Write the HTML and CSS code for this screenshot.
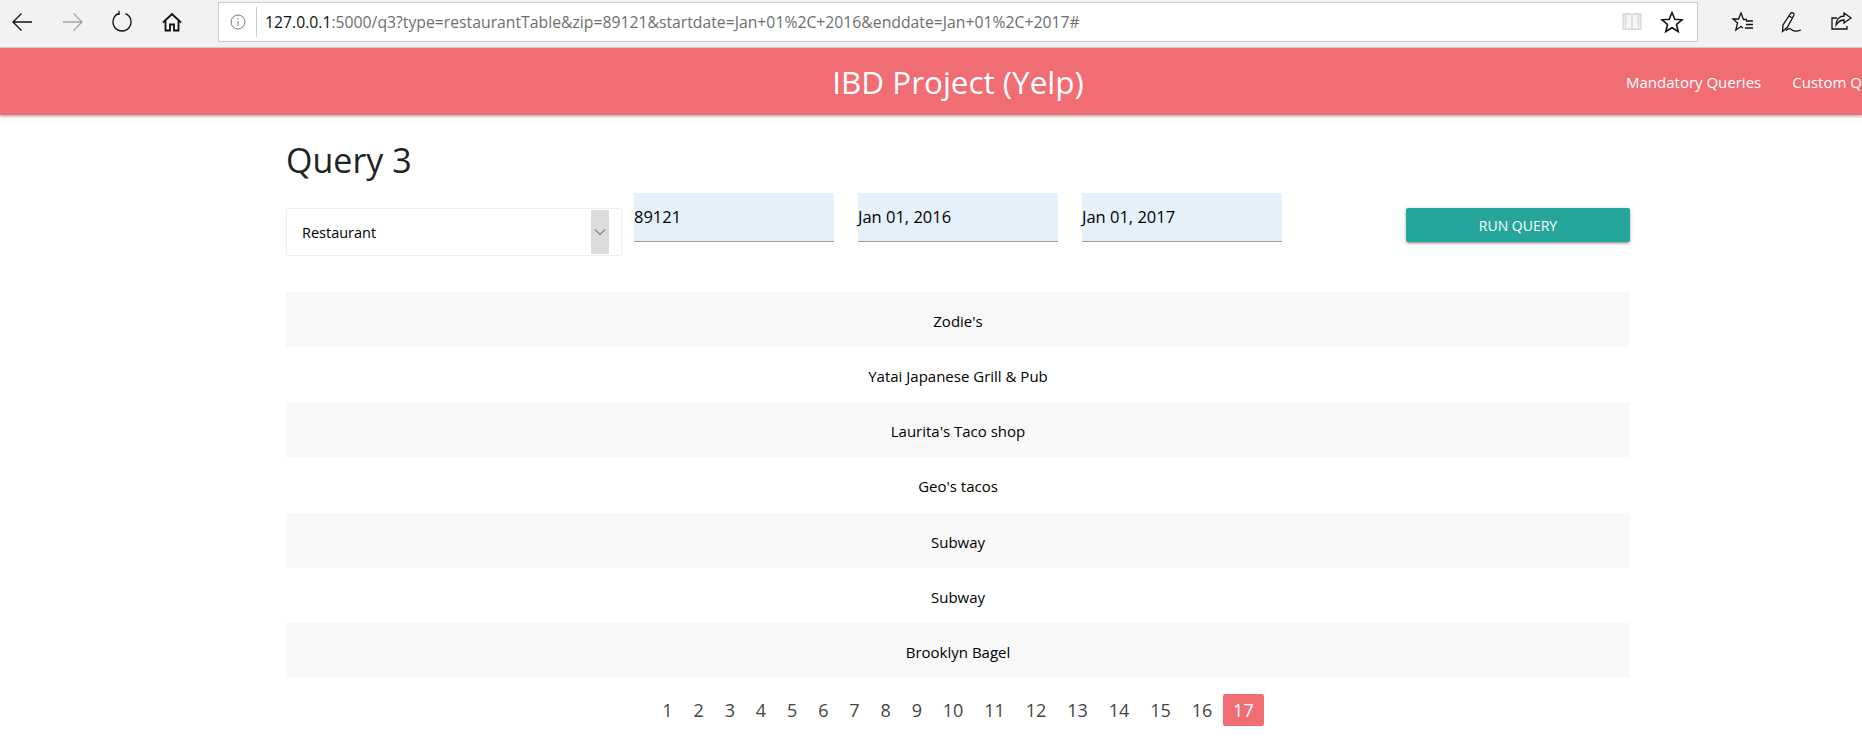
FILE: index.html
```html
<!DOCTYPE html>
<html lang="en">
  <head>
    <meta charset="UTF-8" />
    <title>IBD Project (Yelp)</title>
    <link rel="stylesheet" href="styles.css">
  </head>
  <body>
    <!-- Browser toolbar -->
    <div class="toolbar">
      <div class="tool-group">
        <svg class="tool" viewBox="0 0 24 24"><path d="M22 12H3M11.500 3.500 3 12l8.500 8.500"/></svg>
        <svg class="tool tool-off" viewBox="0 0 24 24"><path d="M3 12h19M13.500 3.500 22 12l-8.500 8.500"/></svg>
        <svg class="tool" viewBox="0 0 24 24"><path d="M8.500 3.700A9 9 0 1 0 15.500 3.700M9 .8v3.500H5.500"/></svg>
        <svg class="tool tool-bold" viewBox="0 0 24 24"><path d="M3 12.500 12 4l9 8.500M5.500 10.500V20.500h4.500v-6h4v6h4.500V10.500"/></svg>
      </div>
      <div class="address">
        <svg class="info" viewBox="0 0 16 16"><circle cx="8" cy="8" r="7"/><path d="M8 7v5M8 4v1.500"/></svg>
        <span class="url"><b>127.0.0.1</b>:5000/q3?type=restaurantTable&amp;zip=89121&amp;startdate=Jan+01%2C+2016&amp;enddate=Jan+01%2C+2017#</span>
        <svg class="book" viewBox="0 0 20 20"><path d="M1 2h7l2 1 2-1h7v15h-7l-2 1-2-1H1zM10 3v14M3.500 2v13M16.500 2v13"/></svg>
        <svg class="tool star" viewBox="0 0 24 24"><path d="M12 2.500l2.800 6.700 7.200.6-5.500 4.700 1.700 7-6.200-3.800-6.200 3.800 1.700-7L2 9.800l7.200-.6z"/></svg>
      </div>
      <div class="tool-group right-tools">
        <svg class="tool" viewBox="0 0 24 24"><path d="M16 9.500H12.500L10 3 7.500 9H2l4.500 4L4.800 20 10 16.500l2 1.500M15 11h7M15 14.500h7M14 18h8"/></svg>
        <svg class="tool" viewBox="0 0 24 24"><path d="M2.500 21.500 3 15 10.500 3.500c1-1.500 4-.5 3.500 1.500L7.500 17zM9 6l4 2.500M6 20.500c3-3 4-2 6-.5s4 2 9 0"/></svg>
        <svg class="tool" viewBox="0 0 24 24"><path d="M8 8H3v11h15v-3M15 3l7 5-7 5v-3c-4 0-6 2-8 5 0-5 3-9 8-9z"/></svg>
      </div>
    </div>

    <header class="site-header">
      <div class="site-title">IBD Project (Yelp)</div>
      <nav class="site-nav">
        <a>Mandatory Queries</a>
        <a>Custom Queries</a>
      </nav>
    </header>

    <main class="content">
      <h1>Query 3</h1>

      <form class="filters">
        <div class="select-box">
          <span>Restaurant</span>
          <span class="select-arrow">
            <svg viewBox="0 0 12 8"><path d="M1 1.500l5 5 5-5"/></svg>
          </span>
        </div>
        <div class="field">89121</div>
        <div class="field">Jan 01, 2016</div>
        <div class="field">Jan 01, 2017</div>
        <button type="button" class="run-btn">RUN QUERY</button>
      </form>

      <div class="results">
        <div class="result">Zodie's</div>
        <div class="result">Yatai Japanese Grill &amp; Pub</div>
        <div class="result">Laurita's Taco shop</div>
        <div class="result">Geo's tacos</div>
        <div class="result">Subway</div>
        <div class="result">Subway</div>
        <div class="result">Brooklyn Bagel</div>
      </div>

      <ul class="pagination">
        <li>1</li><li>2</li><li>3</li><li>4</li><li>5</li><li>6</li>
        <li>7</li><li>8</li><li>9</li><li>10</li><li>11</li><li>12</li>
        <li>13</li><li>14</li><li>15</li><li>16</li>
        <li class="active">17</li>
      </ul>
    </main>
  </body>
</html>
```

FILE: styles.css
```css
html, body {
  margin: 0;
  height: 738px;
  overflow: hidden;
}
body {
  font-family: "Open Sans", "Noto Sans", sans-serif;
  background: #fff;
  color: #000;
}

/* Browser toolbar */
.toolbar {
  display: flex;
  align-items: center;
  height: 48px;
  padding-bottom: 4px;
  box-sizing: border-box;
  background: #f2f2f2;
  border-bottom: 1px solid #ccc;
}
.tool-group {
  display: flex;
  align-items: center;
  gap: 26px;
  flex: none;
  padding-left: 10px;
  width: 218px;
  box-sizing: border-box;
}
.right-tools {
  width: 164px;
  gap: 25px;
  padding-left: 33px;
}
.tool {
  width: 24px;
  height: 24px;
  flex: none;
  fill: none;
  stroke: #111;
  stroke-width: 1.300;
}
.tool-off {
  stroke: #a5a5a5;
}
.tool-bold {
  stroke-width: 1.800;
}
.address {
  display: flex;
  align-items: center;
  flex: none;
  width: 1480px;
  height: 40px;
  box-sizing: border-box;
  background: #fff;
  border: 1px solid #ccc;
}
.info {
  width: 16px;
  height: 16px;
  margin-left: 11px;
  fill: none;
  stroke: #777;
}
.url {
  flex: 1;
  margin-left: 10px;
  padding-left: 8px;
  border-left: 1px solid #ccc;
  font-size: 15.750px;
  line-height: 30px;
  color: #6e6e6e;
  white-space: nowrap;
}
.url b {
  font-weight: normal;
  color: #111;
}
.book {
  width: 20px;
  height: 20px;
  fill: #f4f4f4;
  stroke: #d4d4d4;
  stroke-width: 1.300;
}
.star {
  margin: 0 13px 0 18px;
  stroke-width: 1.600;
}

/* Site header */
.site-header {
  display: flex;
  align-items: center;
  height: 67px;
  padding-left: 286px;
  background: #f06d74;
  box-shadow: 0 2px 2px rgba(0, 0, 0, .25);
  color: #fff;
  white-space: nowrap;
  position: relative;
}
.site-title {
  flex: none;
  width: 1344px;
  text-align: center;
  font-size: 31.400px;
}
.site-nav {
  display: flex;
  flex: none;
  gap: 31px;
  font-size: 15px;
  margin-left: -4px;
}

/* Query content */
.content {
  width: 1344px;
  margin-left: 286px;
}
h1 {
  margin: 0;
  padding-top: 20px;
  height: 58px;
  font-size: 34px;
  line-height: 50px;
  font-weight: 400;
  color: #222;
}
.filters {
  display: flex;
  align-items: flex-start;
  height: 99px;
}
.select-box {
  display: flex;
  align-items: center;
  justify-content: space-between;
  box-sizing: border-box;
  width: 336px;
  height: 48px;
  margin-top: 15px;
  margin-right: 12px;
  padding: 1px 12px 1px 15px;
  border: 1px solid #eee;
  border-radius: 2px;
  font-size: 14.500px;
  line-height: 26px;
}
.select-box > span:first-child {
  padding-top: 2px;
}
.select-arrow {
  display: flex;
  align-items: center;
  justify-content: center;
  width: 18px;
  align-self: stretch;
  background: #dcdcdc;
}
.select-arrow svg {
  width: 12px;
  height: 8px;
  fill: none;
  stroke: #444;
}
.field {
  box-sizing: border-box;
  width: 200px;
  height: 49px;
  margin-right: 24px;
  padding-top: 12px;
  background: #e4f0fa;
  border-bottom: 1px solid #9e9e9e;
  font-size: 16.500px;
  line-height: 24px;
}
.run-btn {
  width: 224px;
  height: 34px;
  margin-top: 15px;
  margin-left: 100px;
  border: 0;
  border-radius: 2px;
  background: #26a69a;
  color: #fff;
  font-family: inherit;
  font-size: 14px;
  box-shadow: 0 2px 2px rgba(0, 0, 0, .14), 0 3px 1px -2px rgba(0, 0, 0, .12), 0 1px 5px rgba(0, 0, 0, .2);
}

/* Results table */
.result {
  box-sizing: border-box;
  height: 55.150px;
  padding-top: 2px;
  line-height: 55px;
  text-align: center;
  font-size: 15px;
}
.result:nth-child(odd) {
  background: #f8f8f8;
}

/* Pagination */
.pagination {
  display: flex;
  justify-content: center;
  margin: 16px 0 0;
  padding: 0;
  list-style: none;
  font-size: 18px;
  color: #444;
}
.pagination li {
  padding: 0 10.450px;
  height: 32px;
  line-height: 33px;
  border-radius: 2px;
}
.pagination .active {
  background: #f06d74;
  color: #fff;
}
```
